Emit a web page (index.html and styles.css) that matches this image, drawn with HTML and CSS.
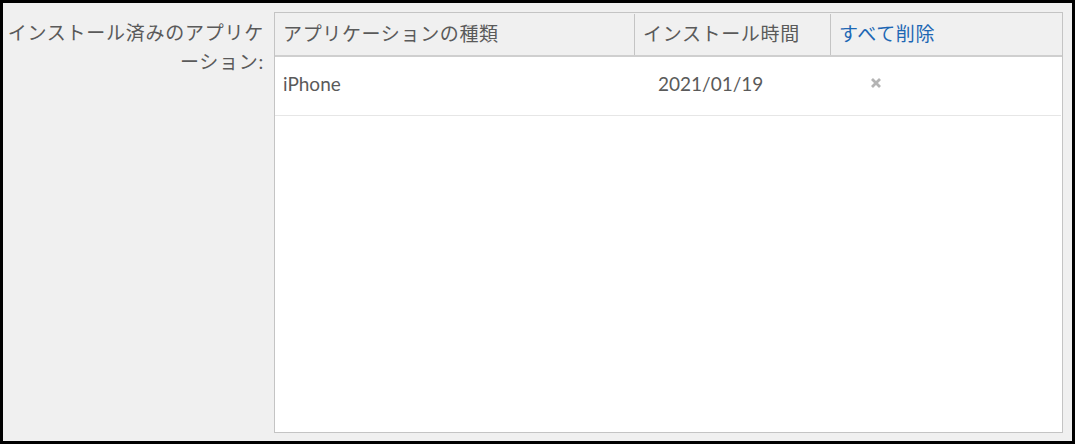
FILE: index.html
```html
<!DOCTYPE html>
<html lang="ja">
<head>
<meta charset="UTF-8">
<title>インストール済みのアプリケーション</title>
<link rel="stylesheet" href="styles.css">
</head>
<body>

<div class="frame">
    <div class="field-label">インストール済みのアプリケーション:</div>
    <div class="app-table">
        <div class="table-head">
            <div class="th th-type">アプリケーションの種類</div>
            <div class="th th-time">インストール時間</div>
            <div class="th th-action"><a href="#" class="delete-all">すべて削除</a></div>
        </div>
        <div class="table-row">
            <div class="td td-type">iPhone</div>
            <div class="td td-time">2021/01/19</div>
            <div class="td td-action">
                <svg class="remove" width="12" height="12" viewBox="0 0 12 12">
                    <path d="M2 2 L10 10 M10 2 L2 10" stroke="#b4b4b4" stroke-width="2.8"/>
                </svg>
            </div>
        </div>
    </div>
</div>

</body>
</html>
```

FILE: styles.css
```css
* {
    box-sizing: border-box;
}

html, body {
    margin: 0;
    height: 100%;
}

body {
    font-family: Lato, "Noto Sans CJK JP", sans-serif;
    font-size: 19px;
    color: #5a5a5a;
    background-color: #000;
}

.frame {
    display: flex;
    height: 444px;
    border: 3px solid #000;
    background-color: #f0f0f0;
    padding: 9px 9px 8px 0;
}

.field-label {
    width: 271px;
    padding: 6px 10px 0 4px;
    text-align: right;
    line-height: 29px;
    letter-spacing: 0.75px;
}

.app-table {
    flex: 1;
    background-color: #fff;
    border: 1px solid #c4c4c4;
}

.table-head {
    display: flex;
    height: 44px;
    background-color: #f0f0f0;
    border-bottom: 2px solid #cfcfcf;
}

.th {
    margin-top: 1px;
    padding-left: 8px;
    line-height: 39px;
    letter-spacing: 0.65px;
}

.th-type {
    width: 359px;
}

.th-time {
    width: 196px;
    border-left: 1px solid #c4c4c4;
}

.th-action {
    flex: 1;
    border-left: 1px solid #c4c4c4;
}

.delete-all {
    color: #1d67b4;
    text-decoration: none;
}

.table-row {
    display: flex;
    align-items: center;
    height: 59px;
    margin-right: 1px;
    padding-bottom: 6px;
    border-bottom: 1px solid #e6e6e6;
}

.td-type {
    width: 383px;
    padding-left: 8px;
}

.td-time {
    width: 212px;
}

.td-action {
    flex: 1;
    display: flex;
}

.remove {
    display: block;
}
```
